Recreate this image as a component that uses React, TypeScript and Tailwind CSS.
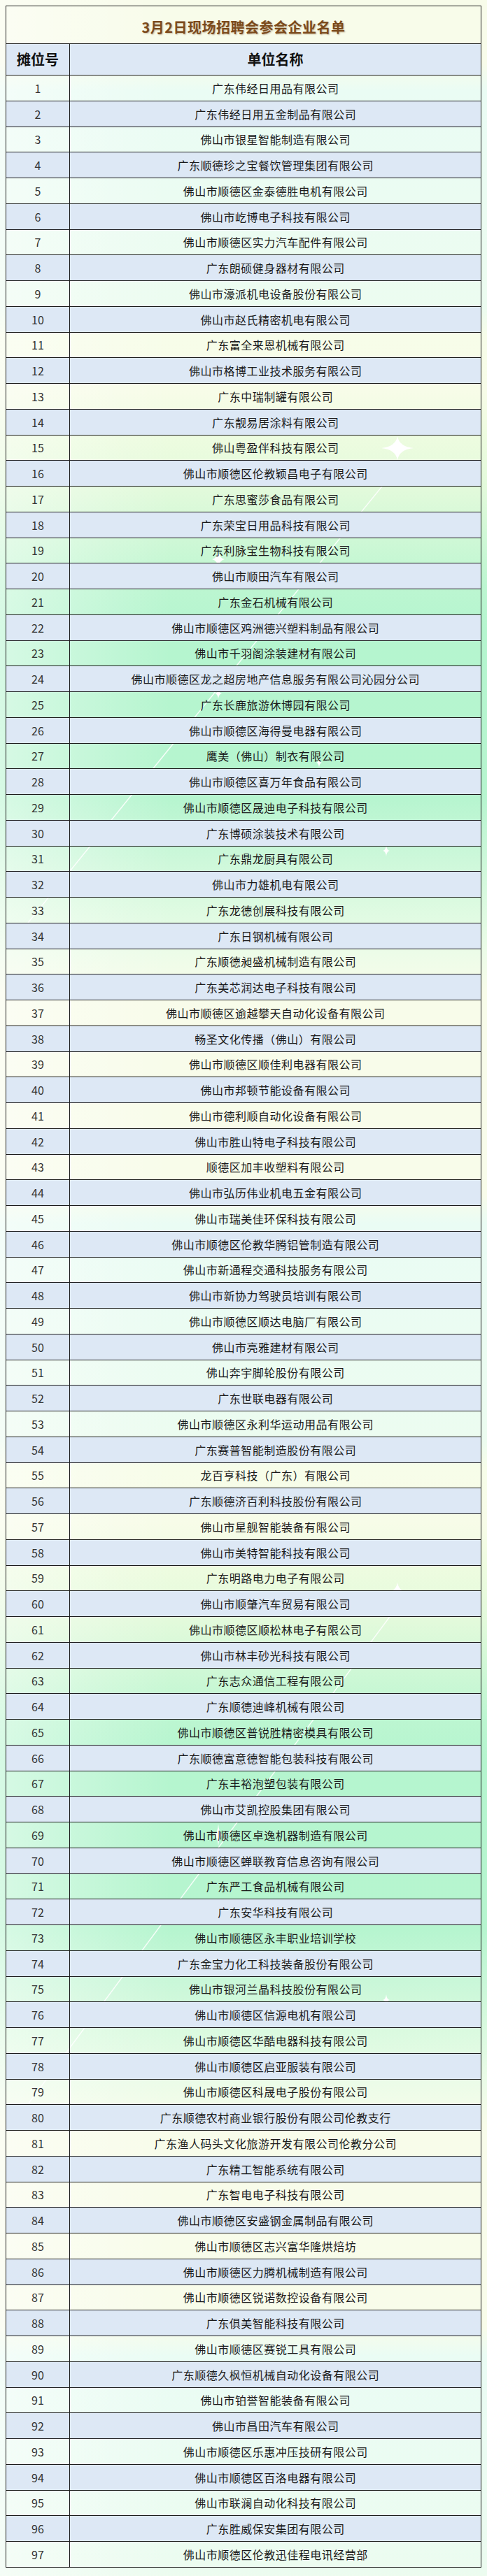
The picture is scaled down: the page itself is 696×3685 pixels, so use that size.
import React from "react";

const companies: string[] = [
  "广东伟经日用品有限公司",
  "广东伟经日用五金制品有限公司",
  "佛山市银星智能制造有限公司",
  "广东顺德珍之宝餐饮管理集团有限公司",
  "佛山市顺德区金泰德胜电机有限公司",
  "佛山市屹博电子科技有限公司",
  "佛山市顺德区实力汽车配件有限公司",
  "广东朗硕健身器材有限公司",
  "佛山市濠派机电设备股份有限公司",
  "佛山市赵氏精密机电有限公司",
  "广东富全来恩机械有限公司",
  "佛山市格博工业技术服务有限公司",
  "广东中瑞制罐有限公司",
  "广东靓易居涂料有限公司",
  "佛山粤盈伴科技有限公司",
  "佛山市顺德区伦教颖昌电子有限公司",
  "广东思蜜莎食品有限公司",
  "广东荣宝日用品科技有限公司",
  "广东利脉宝生物科技有限公司",
  "佛山市顺田汽车有限公司",
  "广东金石机械有限公司",
  "佛山市顺德区鸡洲德兴塑料制品有限公司",
  "佛山市千羽阁涂装建材有限公司",
  "佛山市顺德区龙之超房地产信息服务有限公司沁园分公司",
  "广东长鹿旅游休博园有限公司",
  "佛山市顺德区海得曼电器有限公司",
  "鹰美（佛山）制衣有限公司",
  "佛山市顺德区喜万年食品有限公司",
  "佛山市顺德区晟迪电子科技有限公司",
  "广东博硕涂装技术有限公司",
  "广东鼎龙厨具有限公司",
  "佛山市力雄机电有限公司",
  "广东龙德创展科技有限公司",
  "广东日钢机械有限公司",
  "广东顺德昶盛机械制造有限公司",
  "广东美芯润达电子科技有限公司",
  "佛山市顺德区逾越攀天自动化设备有限公司",
  "畅圣文化传播（佛山）有限公司",
  "佛山市顺德区顺佳利电器有限公司",
  "佛山市邦顿节能设备有限公司",
  "佛山市德利顺自动化设备有限公司",
  "佛山市胜山特电子科技有限公司",
  "顺德区加丰收塑料有限公司",
  "佛山市弘历伟业机电五金有限公司",
  "佛山市瑞美佳环保科技有限公司",
  "佛山市顺德区伦教华腾铝管制造有限公司",
  "佛山市新通程交通科技服务有限公司",
  "佛山市新协力驾驶员培训有限公司",
  "佛山市顺德区顺达电脑厂有限公司",
  "佛山市亮雅建材有限公司",
  "佛山奔宇脚轮股份有限公司",
  "广东世联电器有限公司",
  "佛山市顺德区永利华运动用品有限公司",
  "广东赛普智能制造股份有限公司",
  "龙百亨科技（广东）有限公司",
  "广东顺德济百利科技股份有限公司",
  "佛山市星舰智能装备有限公司",
  "佛山市美特智能科技有限公司",
  "广东明路电力电子有限公司",
  "佛山市顺肇汽车贸易有限公司",
  "佛山市顺德区顺松林电子有限公司",
  "佛山市林丰砂光科技有限公司",
  "广东志众通信工程有限公司",
  "广东顺德迪峰机械有限公司",
  "佛山市顺德区普锐胜精密模具有限公司",
  "广东顺德富意德智能包装科技有限公司",
  "广东丰裕泡塑包装有限公司",
  "佛山市艾凯控股集团有限公司",
  "佛山市顺德区卓逸机器制造有限公司",
  "佛山市顺德区蝉联教育信息咨询有限公司",
  "广东严工食品机械有限公司",
  "广东安华科技有限公司",
  "佛山市顺德区永丰职业培训学校",
  "广东金宝力化工科技装备股份有限公司",
  "佛山市银河兰晶科技股份有限公司",
  "佛山市顺德区信源电机有限公司",
  "佛山市顺德区华酷电器科技有限公司",
  "佛山市顺德区启亚服装有限公司",
  "佛山市顺德区科晟电子股份有限公司",
  "广东顺德农村商业银行股份有限公司伦教支行",
  "广东渔人码头文化旅游开发有限公司伦教分公司",
  "广东精工智能系统有限公司",
  "广东智电电子科技有限公司",
  "佛山市顺德区安盛钢金属制品有限公司",
  "佛山市顺德区志兴富华隆烘焙坊",
  "佛山市顺德区力腾机械制造有限公司",
  "佛山市顺德区锐诺数控设备有限公司",
  "广东俱美智能科技有限公司",
  "佛山市顺德区赛锐工具有限公司",
  "广东顺德久枫恒机械自动化设备有限公司",
  "佛山市铂誉智能装备有限公司",
  "佛山市昌田汽车有限公司",
  "佛山市顺德区乐惠冲压技研有限公司",
  "佛山市顺德区百洛电器有限公司",
  "佛山市联澜自动化科技有限公司",
  "广东胜威保安集团有限公司",
  "佛山市顺德区伦教迅佳程电讯经营部",
];

// sparkle: cx, cy, half width, half height
const stars: [number, number, number, number][] = [
  [568, 641, 23, 17],
  [312, 800, 9, 13],
  [312, 992, 5, 8],
  [456, 1091, 4, 7],
  [552, 1217, 5, 8],
  [568, 2281, 23, 17],
  [312, 2625, 7, 16],
  [552, 2861, 5, 8],
];

function starPath(cx: number, cy: number, rx: number, ry: number) {
  const k = 0.12;
  return `M${cx} ${cy - ry} Q${cx + rx * k} ${cy - ry * k} ${cx + rx} ${cy} Q${cx + rx * k} ${cy + ry * k} ${cx} ${cy + ry} Q${cx - rx * k} ${cy + ry * k} ${cx - rx} ${cy} Q${cx - rx * k} ${cy - ry * k} ${cx} ${cy - ry}Z`;
}

function Decor() {
  return (
    <svg
      className="pointer-events-none absolute left-0 top-0"
      width={696}
      height={3685}
      viewBox="0 0 696 3685"
    >
      <line x1={575} y1={660} x2={40} y2={1320} stroke="#ffffff" strokeOpacity={0.85} strokeWidth={1.5} />
      <line x1={585} y1={2275} x2={40} y2={3010} stroke="#ffffff" strokeOpacity={0.85} strokeWidth={1.5} />
      {stars.map(([cx, cy, rx, ry], i) => (
        <path key={i} d={starPath(cx, cy, rx, ry)} fill="#ffffff" />
      ))}
    </svg>
  );
}

export default function App() {
  return (
    <div className="relative min-h-[3685px] w-[696px] overflow-hidden bg-[linear-gradient(to_bottom,#f8fcea_0px,#f8fcea_90px,#eafcf4_130px,#ecfcf0_440px,#f7fde9_480px,#f7fce8_560px,#eefce0_620px,#e2fadb_700px,#cff8d6_770px,#bcf6d1_840px,#b5f5cf_900px,#b6f5cf_1140px,#c8f7d8_1210px,#d9fadf_1280px,#ebfce8_1357px,#f8fcea_1420px,#f8fcea_1620px)] bg-[length:100%_1620px] bg-repeat-y font-['Noto_Sans_CJK_SC',sans-serif]">
      <div className="pointer-events-none absolute inset-0 bg-[linear-gradient(to_right,rgba(255,255,255,0.45)_0%,rgba(255,255,255,0)_35%)]" />
      <Decor />
      <div className="relative ml-[8px] mt-[8px] w-[680px] border-x border-t border-[#1c1c1c]">
        <div className="flex h-[54px] items-center justify-center border-b border-[#1c1c1c] pt-[7px] text-[20px] font-bold tracking-[0.5px] text-[#7b4a1c] [text-shadow:1px_1px_2px_rgba(110,60,10,0.35)]">
          3月2日现场招聘会参会企业名单
        </div>
        <div className="flex h-[45px] border-b border-[#1c1c1c] bg-[#dde8f5] text-[20px] font-bold text-[#111]">
          <div className="flex w-[91px] items-center justify-center border-r border-[#1c1c1c]">摊位号</div>
          <div className="flex flex-1 items-center justify-center">单位名称</div>
        </div>
        {companies.map((name, i) => (
          <div
            key={i}
            className={`flex h-[36.76px] border-b border-[#1c1c1c] ${i % 2 === 1 ? "bg-[#dde8f5]" : ""}`}
          >
            <div className="flex w-[91px] items-center justify-center border-r border-[#1c1c1c] text-[16px] text-[#333]">
              {i + 1}
            </div>
            <div className="flex flex-1 items-center justify-center pl-[0.5px] text-[16px] tracking-[0.5px] text-[#1a1a1a]">
              {name}
            </div>
          </div>
        ))}
      </div>
    </div>
  );
}
